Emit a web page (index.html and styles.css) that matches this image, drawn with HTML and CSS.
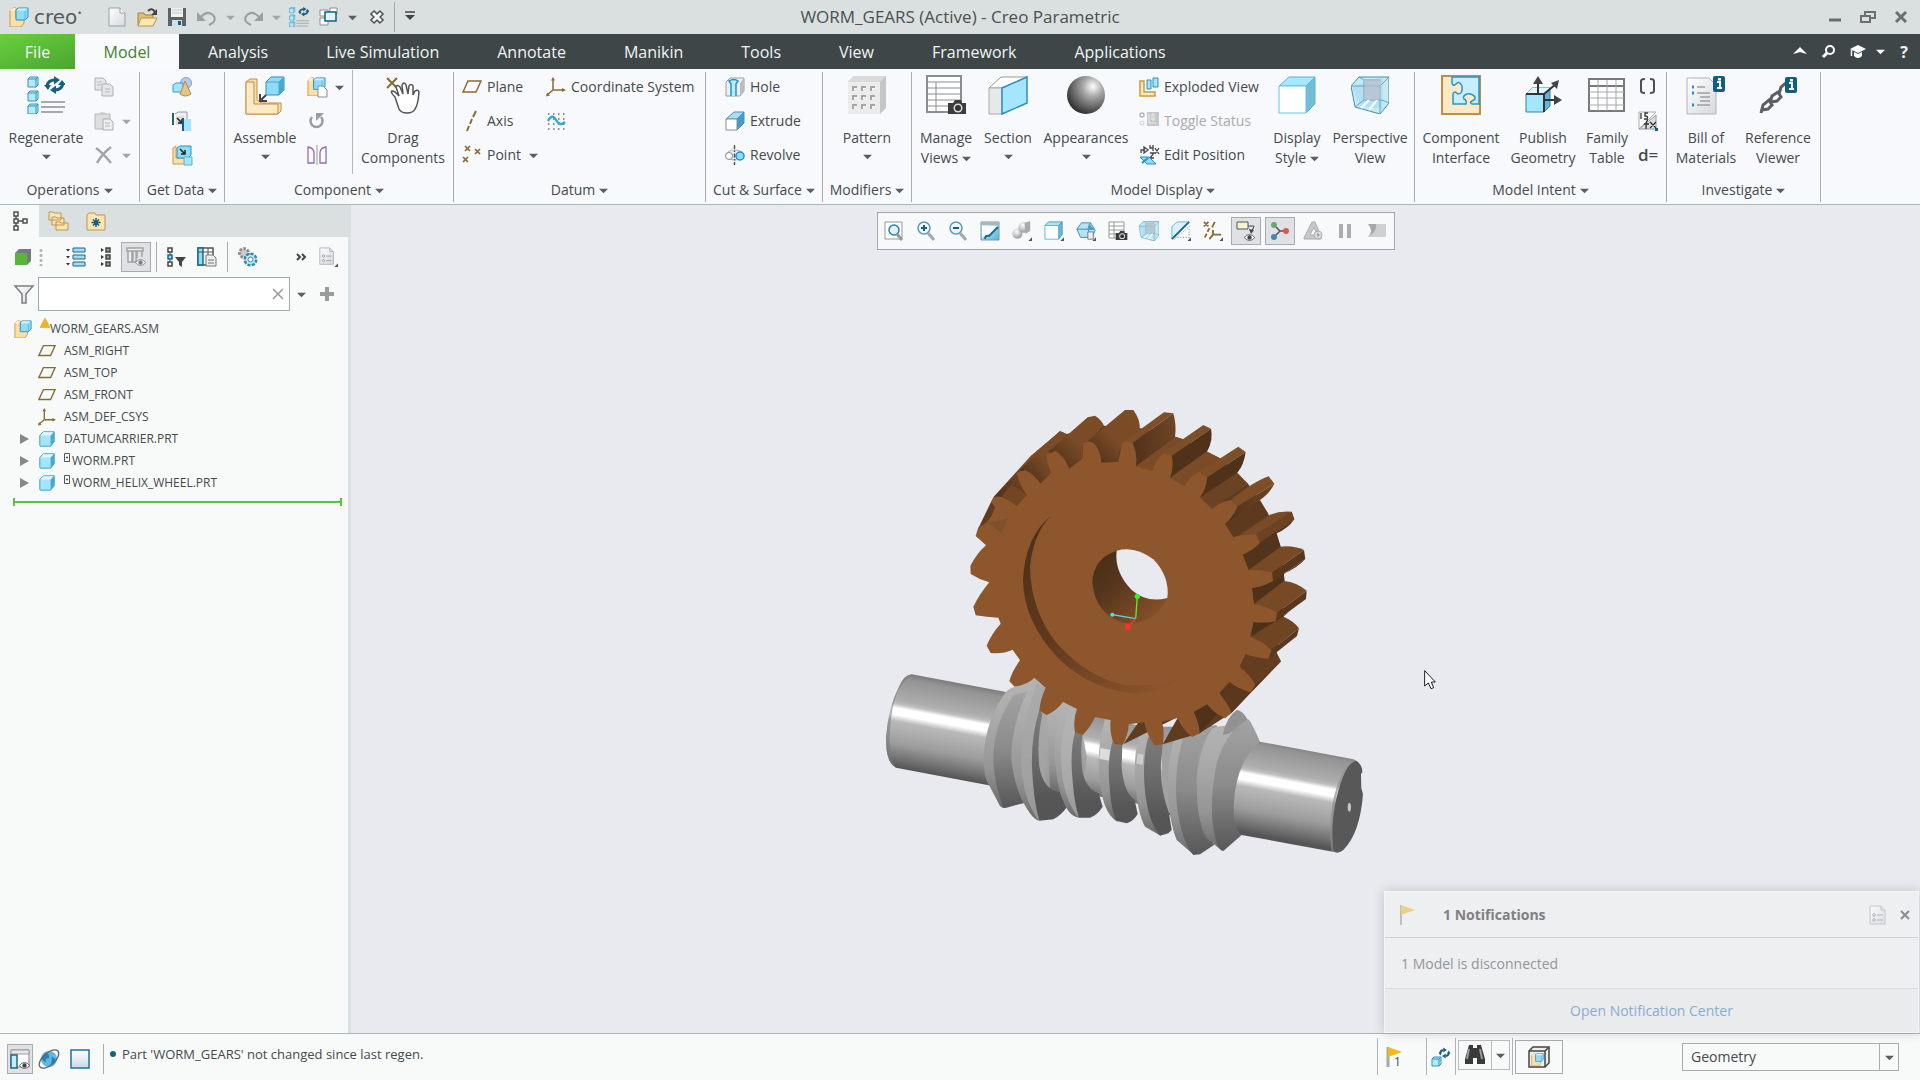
FILE: index.html
```html
<!DOCTYPE html>
<html lang="en">
<head>
<meta charset="utf-8">
<title>WORM_GEARS (Active) - Creo Parametric</title>
<link rel="stylesheet" href="styles.css">
</head>
<body>
<svg class="defs" aria-hidden="true">
  <defs>
    <linearGradient id="gDoc" x1="0" y1="0" x2="1" y2="1"><stop offset="0" stop-color="#fff"/><stop offset="1" stop-color="#d5d9dd"/></linearGradient>
    <linearGradient id="gBlue" x1="0" y1="0" x2="1" y2="1"><stop offset="0" stop-color="#eefaff"/><stop offset="1" stop-color="#4fb4dc"/></linearGradient>
    <linearGradient id="gWin" x1="0" y1="0" x2="0" y2="1"><stop offset="0" stop-color="#fff"/><stop offset="1" stop-color="#c9d8e0"/></linearGradient>
    <radialGradient id="gBall" cx=".68" cy=".28" r=".75"><stop offset="0" stop-color="#fff"/><stop offset=".35" stop-color="#a8a8a8"/><stop offset="1" stop-color="#333"/></radialGradient>
    <radialGradient id="gBall2" cx=".4" cy=".3" r=".8"><stop offset="0" stop-color="#fff"/><stop offset="1" stop-color="#8a8a8a"/></radialGradient>
    <linearGradient id="gShaft" gradientUnits="userSpaceOnUse" x1="300" y1="880" x2="248" y2="1158"><stop offset="0" stop-color="#7b7b7b"/><stop offset=".06" stop-color="#939393"/><stop offset=".3" stop-color="#aeaeae"/><stop offset=".34" stop-color="#c0c0c0"/><stop offset=".38" stop-color="#fff"/><stop offset=".45" stop-color="#fff"/><stop offset=".52" stop-color="#b9b9b9"/><stop offset=".75" stop-color="#9d9d9d"/><stop offset=".92" stop-color="#6e6e6e"/><stop offset="1" stop-color="#555"/></linearGradient>
    <linearGradient id="gLight" x1="0" y1="0" x2="0" y2="1"><stop offset="0" stop-color="#b4b4b4"/><stop offset=".3" stop-color="#ababab"/><stop offset=".7" stop-color="#959595"/><stop offset="1" stop-color="#6a6a6a"/></linearGradient>
    <linearGradient id="gMid" x1="0" y1="0" x2="0" y2="1"><stop offset="0" stop-color="#a3a3a3"/><stop offset=".5" stop-color="#8b8b8b"/><stop offset="1" stop-color="#575757"/></linearGradient>
    <linearGradient id="gDark" x1="0" y1="0" x2="0" y2="1"><stop offset="0" stop-color="#7b7b7b"/><stop offset=".4" stop-color="#6c6c6c"/><stop offset=".8" stop-color="#565656"/><stop offset="1" stop-color="#555"/></linearGradient>
    <linearGradient id="gFlank" x1="0" y1=".6" x2="1" y2=".3"><stop offset="0" stop-color="#50321b"/><stop offset="1" stop-color="#6f4524"/></linearGradient>
    <linearGradient id="gTooth" x1="1" y1="0" x2="0" y2="1"><stop offset="0" stop-color="#7c4c26"/><stop offset=".5" stop-color="#7a4b26"/><stop offset="1" stop-color="#482c17"/></linearGradient>
    <linearGradient id="gBore" x1="0" y1="0" x2="1" y2="1"><stop offset="0" stop-color="#4a2c17"/><stop offset=".35" stop-color="#54351c"/><stop offset=".75" stop-color="#7b4a25"/><stop offset="1" stop-color="#8d562d"/></linearGradient>
    <linearGradient id="gRing" x1="0" y1="0" x2=".8" y2="1"><stop offset="0" stop-color="#4c2f1a"/><stop offset=".5" stop-color="#60391d"/><stop offset="1" stop-color="#8d562d"/></linearGradient>
  </defs>
  <symbol id="caret" viewBox="0 0 10 10"><path d="M0 3h10L5 8z" fill="currentColor"/></symbol>
  <symbol id="asm" viewBox="0 0 20 20"><path d="M1 4l3-3h3v10h8v5l-3 4H1z" fill="#fbdfa6" stroke="#c99a4d"/><path d="M1 4l3-3h3L5 4z" fill="#fff3d6"/><path d="M7 3l2-2h10v9l-3 3H7z" fill="#8fdcf9" stroke="#2f8fb8"/><path d="M7.500 3.500L9 1.500h9.500L16 3.500z" fill="#d4f3ff"/><path d="M16 4v9" stroke="#5bb6da"/></symbol>
  <symbol id="cube" viewBox="0 0 20 20"><path d="M2 6l4-4h12v11l-4 5H3q-1 0-1-1z" fill="#a5e4fd" stroke="#2a9cca"/><path d="M14 6l4-4v11l-4 5z" fill="#4ba7ce"/><path d="M3 6l3-3.500h11L14 6z" fill="#dff6ff"/></symbol>
  <symbol id="plane" viewBox="0 0 20 20"><path d="M6 4h13l-5 11H1z" fill="none" stroke="#866b35" stroke-width="1.500"/></symbol>
  <symbol id="csys" viewBox="0 0 20 20"><path d="M7 2v11h11M7 13l-6 5" fill="none" stroke="#866b35" stroke-width="1.500"/><path d="M5 3.500L7 0l2 3.500zM16 11l4 2-4 2zM0 19.500l1-4 3 3z" fill="#866b35"/></symbol>
  <symbol id="sync" viewBox="0 0 20 20"><path d="M3 10a6 5 0 0 1 5-5M17 10a6 5 0 0 1-5 5" fill="none" stroke="#15607f" stroke-width="3"/><path d="M8 1l6 4-6 4zM12 19l-6-4 6-4zM0 9h6l-3 5zM20 11h-6l3-5z" fill="#15607f"/></symbol>
  <symbol id="regen" viewBox="0 0 38 38"><g fill="#b7e9fd" stroke="#3195bf"><path d="M1 3l2-2h8v8l-2 2H1zM1 17l2-2h8v8l-2 2H1zM1 30l2-2h8v8l-2 2H1z"/><path d="M9 3v8M9 17v8M9 30v8M1 3h8l2-2M1 17h8l2-2M1 30h8l2-2" fill="none"/></g><path d="M14 26h24M14 31h24M14 36h22" stroke="#a6a9ad" stroke-width="2"/><path d="M20 10q1-6 8-6M36 7q-1 7-8 7" fill="none" stroke="#15607f" stroke-width="3"/><path d="M27 0l6 4-6 4.500zM29 18l-6-4 6-4.500zM17 9h7l-3 5zM31 9h8l-4-5z" fill="#15607f"/></symbol>
  <symbol id="doc" viewBox="0 0 20 20"><path d="M2 1h11l5 5v13H2z" fill="url(#gDoc)" stroke="#9a9ea2"/><path d="M13 1v5h5" fill="#fff" stroke="#9a9ea2"/></symbol>
  <symbol id="listdoc" viewBox="0 0 20 20"><path d="M2 1h11l4 4v14H2z" fill="url(#gDoc)" stroke="#b0b4b8"/><path d="M13 1v4h4" fill="#dde" stroke="#b0b4b8"/><g fill="none" stroke="#9a9ea2"><circle cx="6" cy="10" r="1.300"/><circle cx="6" cy="15" r="1.300"/><path d="M9 10h6M9 15h6"/></g></symbol>
  <symbol id="persp" viewBox="0 0 38 38"><path d="M1 10L32 1v32L8 30z" fill="#c5e8f5"/><path d="M8 1h30v26l-9 11L4 31 0 10z" fill="#a8dcf0" fill-opacity=".6" stroke="#3f8fb0"/><path d="M0 10h29L38 1M29 10v28M8 1l5 3v20L4 31M13 24h18l7 3M13 4h16" fill="none" stroke="#5ea8c6"/><path d="M10 32l8-8M18 34l8-10" stroke="#fff" stroke-width="2"/><path d="M13 4h17v20H13z" fill="#b9bcc8" fill-opacity=".7"/></symbol>
  <symbol id="camera" viewBox="0 0 20 14"><path d="M1 3h5l2-3h6l1 3h4v11H1z" fill="#3c3c3c"/><circle cx="11" cy="8" r="4.500" fill="#ddd"/><circle cx="11" cy="8" r="3" fill="#333"/></symbol>
  <symbol id="info" viewBox="0 0 12 16"><rect width="12" height="16" rx="2" fill="#0f5f84"/><path d="M4 6h3v6h2M4 12h3" stroke="#fff" stroke-width="2" fill="none"/><path d="M5 2h3v2.500H5z" fill="#fff"/></symbol>
  <symbol id="eye" viewBox="0 0 12 8"><path d="M0 4q6-7 12 0-6 7-12 0z" fill="#fff" stroke="#555"/><circle cx="6" cy="4" r="2.500" fill="#444"/></symbol>
  <symbol id="cross" viewBox="0 0 12 12"><path d="M2 2l8 8M10 2l-8 8" stroke="currentColor" stroke-width="2"/></symbol>
  <symbol id="corner" viewBox="0 0 4 4"><path d="M4 0v4H0z" fill="#555"/></symbol>
</svg>

<header class="titlebar">
  <div class="quick">
    <span class="brand"><svg class="i20"><use href="#asm"/></svg><span class="brand-name">creo<sup>•</sup></span></span>
    <button class="tool" aria-label="New"><svg class="i20"><use href="#doc"/></svg></button>
    <button class="tool" aria-label="Open"><svg class="i20" viewBox="0 0 20 20"><path d="M1 6h6l1 2h8v10H1z" fill="#e9bd6c" stroke="#a5803e"/><path d="M4 11h16l-4 8H1z" fill="#fde7b5" stroke="#b8924f"/><path d="M11 4q4-4 7 1" fill="none" stroke="#444" stroke-width="2"/><path d="M20 2v6h-6z" fill="#444"/></svg></button>
    <button class="tool" aria-label="Save"><svg class="i20" viewBox="0 0 20 20"><path d="M1 1h18v18H1z" fill="#5e6265"/><path d="M4 1h12v9H4z" fill="#f0f1f1"/><path d="M5 3h10M5 6h10" stroke="#c4c6c8"/><path d="M5 13h10v6H5z" fill="#cfe0e8"/><path d="M11 14h3v4h-3z" fill="#17607f"/></svg></button>
    <button class="tool off" aria-label="Undo"><svg class="i20" viewBox="0 0 20 20"><path d="M4 10q6-7 12-2 5 6-4 10" fill="none" stroke="#9b9fa0" stroke-width="2"/><path d="M0 5v9h9z" fill="#9b9fa0"/></svg></button>
    <button class="drop off" aria-label="Undo list"><svg class="car"><use href="#caret"/></svg></button>
    <button class="tool off" aria-label="Redo"><svg class="i20" viewBox="0 0 20 20"><path d="M16 10q-6-7-12-2-5 6 4 10" fill="none" stroke="#9b9fa0" stroke-width="2"/><path d="M20 5v9h-9z" fill="#9b9fa0"/></svg></button>
    <button class="drop off" aria-label="Redo list"><svg class="car"><use href="#caret"/></svg></button>
    <button class="tool" aria-label="Regenerate"><svg class="i20"><use href="#regen"/></svg></button>
    <button class="tool" aria-label="Windows"><svg class="i20" viewBox="0 0 20 20"><g fill="#fff" stroke="#8b9093"><path d="M1 3h8v6H1zM11 1h7v6h-7zM1 11h8v7H1z"/></g><path d="M6 5h11v9H6z" fill="#dff4fd" stroke="#15607f" stroke-width="1.500"/></svg></button>
    <button class="drop" aria-label="Window list"><svg class="car"><use href="#caret"/></svg></button>
    <button class="tool wide" aria-label="Close window"><svg class="i16" viewBox="0 0 16 16"><path d="M3 3l10 10M13 3L3 13" stroke="#4c5254" stroke-width="6"/><path d="M4 4l8 8M12 4l-8 8" stroke="#f4f6f6" stroke-width="3"/></svg></button>
    <span class="bar-rule"></span>
    <button class="tool" aria-label="Customize toolbar"><svg class="i16" viewBox="0 0 16 16"><path d="M3 3h10" stroke="#444" stroke-width="1.500"/><path d="M3 6h10l-5 5z" fill="#444"/></svg></button>
  </div>
  <h1 class="title">WORM_GEARS (Active) - Creo Parametric</h1>
  <div class="winctl">
    <button aria-label="Minimize"><svg class="i16" viewBox="0 0 16 16"><path d="M2 11h12" stroke="#6b6f71" stroke-width="3"/></svg></button>
    <button aria-label="Restore"><svg class="i16" viewBox="0 0 16 16"><path d="M5 6V3h10v6h-4" fill="none" stroke="#6b6f71" stroke-width="2"/><path d="M1 7h9v6H1z" fill="none" stroke="#6b6f71" stroke-width="2"/></svg></button>
    <button aria-label="Close"><svg class="i16" viewBox="0 0 16 16"><path d="M3 3l10 10M13 3L3 13" stroke="#6b6f71" stroke-width="3"/></svg></button>
  </div>
</header>

<nav class="tabs">
  <button class="tab file">File</button>
  <button class="tab active">Model</button>
  <button class="tab">Analysis</button>
  <button class="tab">Live Simulation</button>
  <button class="tab">Annotate</button>
  <button class="tab">Manikin</button>
  <button class="tab">Tools</button>
  <button class="tab">View</button>
  <button class="tab">Framework</button>
  <button class="tab">Applications</button>
  <div class="tabs-right">
    <button aria-label="Minimize ribbon"><svg class="i16" viewBox="0 0 16 16"><path d="M1 10l7-7 7 7-4-1-3-1-3 1z" fill="#fff"/></svg></button>
    <button aria-label="Search"><svg class="i16" viewBox="0 0 16 16"><circle cx="9" cy="6" r="4" fill="none" stroke="#fff" stroke-width="2"/><path d="M6 9l-4 4" stroke="#fff" stroke-width="3"/></svg></button>
    <button aria-label="Learning"><svg class="i16" viewBox="0 0 16 16"><path d="M0 5l8-4 8 4-8 4z" fill="#fff"/><path d="M4 8v4q4 4 8 0V8L8 10z" fill="#fff"/><path d="M1.500 6v6" stroke="#fff" stroke-width="1.500"/></svg></button>
    <button class="drop" aria-label="Learning list"><svg class="car"><use href="#caret"/></svg></button>
    <button class="help" aria-label="Help">?</button>
  </div>
</nav>

<section class="ribbon">
  <div class="group g-ops">
    <div class="gbody">
      <button class="big"><svg class="i38"><use href="#regen"/></svg><span>Regenerate</span><svg class="car"><use href="#caret"/></svg></button>
      <div class="col">
        <button class="small off" aria-label="Copy"><svg class="i20" viewBox="0 0 20 20"><g fill="#e4e6e8" stroke="#aeb1b4"><path d="M1 1h8l3 3v9H1z"/><path d="M8 7h8l3 3v9H8z"/></g><path d="M3 5h5M3 8h4M11 12h5M11 15h5" stroke="#b6b9bb"/></svg></button>
        <button class="small off" aria-label="Paste"><svg class="i20" viewBox="0 0 20 20"><path d="M1 3h15v15H1z" fill="#dcdee0" stroke="#b4b7ba"/><path d="M5 4q0-3 3.500-3T12 4z" fill="#c9cccf"/><path d="M9 8h7l3 3v8H9z" fill="#eee" stroke="#a9acaf"/><path d="M11 12h5M11 15h5" stroke="#b6b9bb"/></svg><svg class="car"><use href="#caret"/></svg></button>
        <button class="small off" aria-label="Delete"><svg class="i20" viewBox="0 0 20 20"><path d="M2 3q7 5 15 15M17 2Q8 9 3 18" stroke="#a3a5a7" stroke-width="2.500" fill="none"/></svg><svg class="car"><use href="#caret"/></svg></button>
      </div>
    </div>
    <button class="glabel">Operations<svg class="car"><use href="#caret"/></svg></button>
  </div>

  <div class="group g-data">
    <div class="gbody">
      <div class="col">
        <button class="small" aria-label="User-defined feature"><svg class="i20" viewBox="0 0 20 20"><circle cx="14" cy="6" r="5.500" fill="#b9c8ee" stroke="#8b9ad0"/><path d="M1 8l3-2h7v9H1z" fill="#a5e4fd" stroke="#3b9cc4"/><path d="M13 4l6 13q-6 4-11 0z" fill="#e5c487" stroke="#b08c4c"/></svg></button>
        <button class="small" aria-label="Copy geometry"><svg class="i20" viewBox="0 0 20 20"><path d="M3 3l3-2h9v7" fill="#eee" stroke="#9a9a9a"/><path d="M1 2v12" stroke="#2d5d74" stroke-width="2"/><path d="M4 5h8v9H4z" fill="#ddd"/><path d="M5 7l5 5m0-4v4H6" stroke="#222" stroke-width="1.500" fill="none"/><path d="M12 8h7v12h-7z" fill="#a5e4fd"/><path d="M11 7v13" stroke="#15607f" stroke-width="2"/></svg></button>
        <button class="small" aria-label="Shrinkwrap"><svg class="i20" viewBox="0 0 20 20"><path d="M1 3l3-2v12h9v6H1z" fill="#fbdfa6" stroke="#c99a4d"/><path d="M5 3l3-2h11v9l-3 3H5z" fill="#8fdcf9" stroke="#2f8fb8"/><path d="M8 4l5 5m0-4v4H9" stroke="#222" stroke-width="1.500" fill="none"/><path d="M12 12h8v8h-8z" fill="#a5e4fd" stroke="#58b2d5"/></svg></button>
      </div>
    </div>
    <button class="glabel">Get Data<svg class="car"><use href="#caret"/></svg></button>
  </div>

  <div class="group g-comp">
    <div class="gbody">
      <button class="big"><svg class="i38" viewBox="0 0 38 38"><path d="M0 6l4-3h7v21l5 3h19v8l-3 3H0z" fill="#fbdfa6" stroke="#c08e45"/><path d="M0 6h8v22h24v10H0z" fill="#fdeac4" stroke="#c08e45"/><path d="M20 6l5-5h13v13l-5 5H20z" fill="#8fdcf9" stroke="#2f8fb8"/><path d="M20 6h13v13M33 6l5-5" fill="none" stroke="#4ba7ce"/><path d="M33 6l5-5v13l-5 5z" fill="#4ba7ce"/><path d="M20 19l-5 5m-1-6v7h7" stroke="#444" stroke-width="2" fill="none"/></svg><span>Assemble</span><svg class="car"><use href="#caret"/></svg></button>
      <div class="col ruled">
        <button class="small" aria-label="Create"><svg class="i20" viewBox="0 0 20 20"><use href="#asm" width="19" height="19"/><path d="M11 9h5l4 4v7h-9z" fill="#fff" stroke="#8a8d90"/></svg><svg class="car"><use href="#caret"/></svg></button>
        <button class="small" aria-label="Repeat"><svg class="i20" viewBox="0 0 20 20"><path d="M5 6a6 6 0 1 0 9 0" fill="none" stroke="#9a9c9e" stroke-width="2.500"/><path d="M9 2h8l-8 8z" fill="#9a9c9e"/></svg></button>
        <button class="small" aria-label="Mirror component"><svg class="i20" viewBox="0 0 20 20"><path d="M1 2q6 1 6 6v10H1zM19 2q-6 1-6 6v10h6z" fill="#fff" stroke="#9468ba" stroke-width="1.300"/><path d="M10 0v20" stroke="#999"/></svg></button>
      </div>
      <button class="big"><svg class="i38" viewBox="0 0 38 38"><path d="M3 2l10 10M13 2L3 12" stroke="#866b35" stroke-width="2"/><path d="M11 21q-5-5-3-6 3 0 7 5L12 11q1-3 4 0l3 7-1-9q2-4 4 0l2 9 1-8q2-3 4 0v9l2-4q3-2 4 1-1 13-4 17-2 4-8 4-6 0-8-4z" fill="#fff" stroke="#555" stroke-width="1.500"/></svg><span>Drag<br>Components</span></button>
    </div>
    <button class="glabel">Component<svg class="car"><use href="#caret"/></svg></button>
  </div>

  <div class="group g-datum">
    <div class="gbody">
      <div class="col">
        <button class="small"><svg class="i20"><use href="#plane"/></svg>Plane</button>
        <button class="small"><svg class="i20" viewBox="0 0 20 20"><path d="M14 0l-3 6M10 8l-2 5M7 15l-2 5" stroke="#866b35" stroke-width="2"/></svg>Axis</button>
        <button class="small"><svg class="i20" viewBox="0 0 20 20"><path d="M3 1l5 5m0-5L3 6M13 4l5 5m0-5l-5 5M1 12l5 5m0-5l-5 5" stroke="#866b35" stroke-width="1.700"/></svg>Point<svg class="car"><use href="#caret"/></svg></button>
      </div>
      <div class="col">
        <button class="small"><svg class="i20"><use href="#csys"/></svg>Coordinate System</button>
        <button class="small" aria-label="Sketch"><svg class="i20" viewBox="0 0 20 20"><path d="M2 3h17M2 8h17M2 13h17M2 18h17" stroke="#6b6e70" stroke-width="1.500" stroke-dasharray="1.500 3.500"/><path d="M2 10q4-8 8-1t9 2" fill="none" stroke="#33a9de" stroke-width="2.500"/></svg></button>
      </div>
    </div>
    <button class="glabel">Datum<svg class="car"><use href="#caret"/></svg></button>
  </div>

  <div class="group g-cut">
    <div class="gbody">
      <div class="col">
        <button class="small"><svg class="i20" viewBox="0 0 20 20"><path d="M1 5l4-4h14v13l-4 5H1z" fill="#eef0f1" stroke="#9a9ea1"/><path d="M15 6l4-5v13l-4 5z" fill="#b9bdc0"/><path d="M6 19V7L4 4q5-3 9 0l-2 3v12" fill="#b9e9fc" stroke="#1f93c7" stroke-width="1.500"/></svg>Hole</button>
        <button class="small"><svg class="i20" viewBox="0 0 20 20"><path d="M1 8l8-7h10l-7 7z" fill="#a5dff5" stroke="#4f93ae"/><path d="M12 8l7-7v11l-7 7z" fill="#3f9fc8" stroke="#4f93ae"/><path d="M1 8h11v11H1z" fill="#fff" stroke="#8a8e91"/></svg>Extrude</button>
        <button class="small"><svg class="i20" viewBox="0 0 20 20"><ellipse cx="10" cy="10" rx="9" ry="5" fill="#dff3fb" stroke="#9fb7c2"/><circle cx="4" cy="11" r="3.500" fill="#fff" stroke="#888"/><circle cx="15" cy="11" r="4" fill="#8fdcf9" stroke="#1f93c7" stroke-width="1.500"/><path d="M9.500 0v20" stroke="#555" stroke-width="1.500" stroke-dasharray="4 1.500 1.500 1.500"/></svg>Revolve</button>
      </div>
    </div>
    <button class="glabel">Cut &amp; Surface<svg class="car"><use href="#caret"/></svg></button>
  </div>

  <div class="group g-mod">
    <div class="gbody">
      <button class="big"><svg class="i38" viewBox="0 0 38 38"><path d="M0 6l6-6h32v32l-6 6z" fill="#c6c6c6"/><path d="M0 6l6-6h32l-6 6z" fill="#dadada"/><path d="M0 6h32v32H0z" fill="#ececec"/><g fill="#fff" stroke="#a5a5a5" stroke-width="2"><path d="M5 15v-4h4M14 15v-4h4M23 15v-4h4M5 24v-4h4M14 24v-4h4M23 24v-4h4M5 33v-4h4M14 33v-4h4M23 33v-4h4"/></g></svg><span>Pattern</span><svg class="car"><use href="#caret"/></svg></button>
    </div>
    <button class="glabel">Modifiers<svg class="car"><use href="#caret"/></svg></button>
  </div>

  <div class="group g-disp">
    <div class="gbody">
      <button class="big"><svg class="i38" viewBox="0 0 38 38"><path d="M0 0h34v36H0z" fill="#fff" stroke="#8b8e91" stroke-width="2"/><path d="M0 6h34M0 12h34M0 18h34M0 24h34M0 30h34M9 6v30" stroke="#8b8e91" fill="none"/><use href="#camera" x="20" y="24" width="20" height="14"/></svg><span>Manage<br>Views<svg class="car"><use href="#caret"/></svg></span></button>
      <button class="big"><svg class="i38" viewBox="0 0 38 38"><path d="M0 12L12 1h26L13 12z" fill="#fff" stroke="#999"/><path d="M0 12h13v26H0z" fill="#e8e8e8" stroke="#aaa"/><path d="M13 12L38 1v26L13 38z" fill="#a5e6ff" stroke="#2f8fb8" stroke-width="1.500"/></svg><span>Section</span><svg class="car"><use href="#caret"/></svg></button>
      <button class="big"><svg class="i38" viewBox="0 0 38 38"><circle cx="19" cy="19" r="19" fill="url(#gBall)"/></svg><span>Appearances</span><svg class="car"><use href="#caret"/></svg></button>
      <div class="col">
        <button class="small"><svg class="i20" viewBox="0 0 20 20"><path d="M1 4h4v11h11v4H1z" fill="#fdeac4" stroke="#c99a3d" stroke-width="1.500"/><path d="M8 3h4v9H8zM14 1h5v9h-5z" fill="#a5e4fd" stroke="#2f8fb8"/></svg>Exploded View</button>
        <button class="small off"><svg class="i20" viewBox="0 0 20 20"><circle cx="3" cy="4" r="2" fill="none" stroke="#b3b5b7" stroke-width="1.500"/><circle cx="3" cy="12" r="2" fill="none" stroke="#ccc"/><path d="M8 1h12v14H8z" fill="#c5c7c9"/><path d="M10 3v9h7M13 3v6h2V3z" stroke="#eee" fill="none"/></svg>Toggle Status</button>
        <button class="small"><svg class="i20" viewBox="0 0 20 20"><path d="M2 8V5h4M5 2l4 3-4 3zM11 0v3h3V0v6M16 3l4 6m0-6l-4 6M11 8h4l-4 5h4" stroke="#444" stroke-width="1.300" fill="none"/><path d="M1 12h9l7 7H8z" fill="#8fdcf9" stroke="#1f93c7"/><path d="M3 18l6-5" stroke="#1f93c7" stroke-width="2"/></svg>Edit Position</button>
      </div>
      <button class="big"><svg class="i38" viewBox="0 0 38 38"><path d="M1 10l10-9h26l-9 9z" fill="#a5e8ff" stroke="#5fb4d4"/><path d="M28 10l9-9v27l-9 9z" fill="#72bcd6" stroke="#5fb4d4"/><path d="M1 10h27v27H1z" fill="#fff" stroke="#69c4e6"/></svg><span>Display<br>Style<svg class="car"><use href="#caret"/></svg></span></button>
      <button class="big"><svg class="i38"><use href="#persp"/></svg><span>Perspective<br>View</span></button>
    </div>
    <button class="glabel">Model Display<svg class="car"><use href="#caret"/></svg></button>
  </div>

  <div class="group g-intent">
    <div class="gbody">
      <button class="big"><svg class="i38" viewBox="0 0 38 38"><path d="M0 0h38v38H0z" fill="#fdeac4" stroke="#c08e45" stroke-width="2"/><path d="M10 1h27v27h-7q-3-2 0-3 4-2 3-4-3-4-8-3-5 2-3 5 3 1 2 5H11V18q1-4 5 0 5 0 4-8-3-6-6-2-3 3-4-1z" fill="#c6eefe" stroke="#2f94c4" stroke-width="1.500"/></svg><span>Component<br>Interface</span></button>
      <button class="big"><svg class="i38" viewBox="0 0 38 38"><path d="M2 18l6-6h18l-6 6zM20 18l6-6v18l-6 6z" fill="#5fb8de" stroke="#2c86ad"/><path d="M2 18l6-6h18l-6 6z" fill="#dff6ff"/><path d="M2 18h18v18H2z" fill="#a5e6ff" stroke="#2c86ad"/><path d="M2 18h18v18M14 18V6M20 18L32 8M20 24h15" stroke="#333" stroke-width="2" fill="none"/><path d="M14 0l5 8H9zM35 4l-2 9-6-6zM38 24l-8 5V19z" fill="#444"/></svg><span>Publish<br>Geometry</span></button>
      <button class="big"><svg class="i38" viewBox="0 0 38 38"><path d="M1 3h35v32H1z" fill="#fff" stroke="#77797b" stroke-width="2"/><path d="M1 10h35" stroke="#77797b" stroke-width="2"/><path d="M1 16h35M1 22h35M1 29h35M10 4v31M19 4v31M28 4v31" stroke="#a4a6a8"/></svg><span>Family<br>Table</span></button>
      <div class="col">
        <button class="small" aria-label="Parameters"><svg class="i20" viewBox="0 0 20 20"><path d="M7 2Q3 2 3 4v10q0 2 4 2M12 2q4 0 4 2v10q0 2-4 2" fill="none" stroke="#4d4f51" stroke-width="2"/></svg></button>
        <button class="small" aria-label="Switch symbols"><svg class="i20" viewBox="0 0 20 20"><path d="M1 1h17L1 18z" fill="#fff" stroke="#aaa"/><path d="M1 18L18 4v14z" fill="#ddd" stroke="#999"/><path d="M3 2v6M10 2H7v3q4 0 2 3H6M10 9q-2 0-2 9M6 13h5M12 11l6 6m0-6l-6 6" stroke="#333" stroke-width="1.300" fill="none"/><path d="M17 17h3v3h-3z" fill="#15607f"/></svg></button>
        <button class="small relation" aria-label="Relations">d=</button>
      </div>
    </div>
    <button class="glabel">Model Intent<svg class="car"><use href="#caret"/></svg></button>
  </div>

  <div class="group g-inv">
    <div class="gbody">
      <button class="big"><svg class="i38" viewBox="0 0 38 38"><path d="M0 2h22l7 7v29H0z" fill="url(#gDoc)" stroke="#b0b3b6"/><path d="M5 11h2M5 17h2M5 29h2" stroke="#1f93c7" stroke-width="3"/><path d="M10 11h8M10 17h13M13 21h10M13 25h10M10 29h13" stroke="#9da0a3" stroke-width="1.500"/><use href="#info" x="26" y="0" width="12" height="16"/></svg><span>Bill of<br>Materials</span></button>
      <button class="big"><svg class="i38" viewBox="0 0 38 38"><g fill="none" stroke="#5c5e60" stroke-width="3"><path d="M2 37l2-8 6-5 3 5-4 4-6 1M11 27l2-7 6-4 3 5-4 4-6 1M20 18l2-7 5-4"/></g><use href="#info" x="26" y="1" width="12" height="16"/></svg><span>Reference<br>Viewer</span></button>
    </div>
    <button class="glabel">Investigate<svg class="car"><use href="#caret"/></svg></button>
  </div>
</section>

<main class="work">
  <aside class="panel">
    <div class="ptabs">
      <button class="ptab on" aria-label="Model tree"><svg class="i20" viewBox="0 0 20 20"><g fill="none" stroke="#4c4f51" stroke-width="1.500"><path d="M4 1h4v4H4zM4 8h4v4H4zM4 15h4v4H4zM13 8h4v4h-4zM6 5v3M6 12v3M8 10h5"/></g></svg></button>
      <button class="ptab" aria-label="Folder browser"><svg class="i20" viewBox="0 0 20 20"><g fill="#fbe3b2" stroke="#bb9650"><path d="M1 1h4l1 1h7v7H1zM4 6h4l1 1h7v7H4zM8 11h4l1 1h7v7H8z"/></g></svg></button>
      <button class="ptab" aria-label="Favorites"><svg class="i20" viewBox="0 0 20 20"><path d="M1 4l2-2h6l1 2h9v15H1z" fill="#fbe3b2" stroke="#bb9650"/><path d="M10 7v9M5.500 11.500h9M7 8.500l6 6M13 8.500l-6 6" stroke="#15607f" stroke-width="1.500"/></svg></button>
    </div>
    <div class="ptools">
      <button class="pcube" aria-label="Model display"><svg class="i16" viewBox="0 0 16 16"><path d="M0 4l4-4h12l-4 4zM12 4l4-4v12l-4 4z" fill="#77797b"/><path d="M0 4h12v12H0z" fill="#57b63a"/></svg></button>
      <span class="grip"></span>
      <button aria-label="Expand all"><svg class="i20" viewBox="0 0 20 20"><path d="M7 1h12v4H7zM7 8h12v4H7zM7 15h12v4H7z" fill="#9fdcf5" stroke="#1d6887"/><path d="M0 2h4L2 4.500zM0 9h4l-2 2.500zM0 16h4l-2 2.500z" fill="#333"/></svg></button>
      <button aria-label="Collapse all"><svg class="i20" viewBox="0 0 20 20"><path d="M10 1h4v4h-4zM10 8h4v4h-4zM10 15h4v4h-4z" fill="#999" stroke="#444" stroke-width="1.500"/><path d="M5 1v4l3-2zM5 8v4l3-2zM5 15v4l3-2z" fill="#333"/></svg></button>
      <button class="pressed" aria-label="Show columns"><svg class="i20" viewBox="0 0 20 20"><path d="M1 1h16v3H1zM2 4v11h4V4M7 4v11h3V4M11 4v7M16 4v6" stroke="#a0a2a4" stroke-width="1.500" fill="#eee"/><use href="#eye" x="9" y="12" width="11" height="7" opacity=".6"/></svg></button>
      <span class="rule"></span>
      <button aria-label="Tree filters"><svg class="i20" viewBox="0 0 20 20"><path d="M3 5v10" stroke="#444"/><path d="M1 1h4v4H1zM1 15h4v4H1z" fill="#fff" stroke="#444" stroke-width="1.500"/><path d="M1 8h4v4H1z" fill="#8fdcf9" stroke="#1d6887" stroke-width="1.500"/><path d="M8 10h11l-4 5v5l-3-2v-3z" fill="#444"/></svg></button>
      <button aria-label="Tree columns"><svg class="i20" viewBox="0 0 20 20"><path d="M1 1h15v17H1z" fill="#fff" stroke="#555" stroke-width="1.500"/><path d="M1 1h5v17H1z" fill="#8fdcf9" stroke="#1d6887" stroke-width="1.500"/><path d="M1 5h15M11 1v17" stroke="#555"/><path d="M9 8h7l3 3v8H9z" fill="#eee" stroke="#777"/><path d="M11 13h6M11 16h6" stroke="#777"/></svg></button>
      <span class="rule"></span>
      <button aria-label="Settings"><svg class="i20" viewBox="0 0 20 20"><circle cx="6" cy="6" r="4.500" fill="#ccc" stroke="#8b8d8f" stroke-width="3" stroke-dasharray="2.500 1.500"/><circle cx="12.500" cy="12.500" r="5.500" fill="#b8e6f8" stroke="#3089b3" stroke-width="3" stroke-dasharray="3 1.200"/><circle cx="12.500" cy="12.500" r="4.500" fill="#c5ecfb"/><circle cx="12.500" cy="12.500" r="2.500" fill="#fff" stroke="#3089b3"/></svg></button>
      <span class="grow"></span>
      <button class="more" aria-label="More"><svg class="i16" viewBox="0 0 16 16"><path d="M4 5l3 3-3 3M9 5l3 3-3 3" fill="none" stroke="#444" stroke-width="2"/></svg></button>
      <button aria-label="Tree list"><svg class="i20" viewBox="0 0 22 22"><use href="#listdoc" width="20" height="20"/><use href="#corner" x="18" y="18" width="4" height="4"/></svg></button>
    </div>
    <div class="search">
      <button aria-label="Filter"><svg class="i20" viewBox="0 0 20 20"><path d="M1 2h18l-7 8v9H8v-9z" fill="url(#gDoc)" stroke="#7c7f81" stroke-width="1.500"/></svg></button>
      <div class="sbox"><input type="text" aria-label="Search model tree"><button aria-label="Clear"><svg class="i12" viewBox="0 0 12 12"><path d="M1 1l10 10M11 1L1 11" stroke="#999" stroke-width="1.500"/></svg></button></div>
      <button class="drop" aria-label="Search options"><svg class="car"><use href="#caret"/></svg></button>
      <button class="plus" aria-label="Add filter"><svg class="i16" viewBox="0 0 16 16"><path d="M8 1v14M1 8h14" stroke="#999b9d" stroke-width="4"/></svg></button>
    </div>
    <ul class="tree">
      <li class="root"><svg class="i20"><use href="#asm"/></svg><svg class="warn" viewBox="0 0 10 10"><path d="M5 0l5 9.500H0z" fill="#f3b31b" stroke="#d89a10" stroke-width=".5"/></svg><span>WORM_GEARS.ASM</span></li>
      <li><svg class="i20"><use href="#plane"/></svg><span>ASM_RIGHT</span></li>
      <li><svg class="i20"><use href="#plane"/></svg><span>ASM_TOP</span></li>
      <li><svg class="i20"><use href="#plane"/></svg><span>ASM_FRONT</span></li>
      <li><svg class="i20"><use href="#csys"/></svg><span>ASM_DEF_CSYS</span></li>
      <li class="node"><button aria-label="Expand"><svg class="i12" viewBox="0 0 12 12"><path d="M2 1l9 5-9 5z" fill="#85878a"/></svg></button><svg class="i20"><use href="#cube"/></svg><span>DATUMCARRIER.PRT</span></li>
      <li class="node"><button aria-label="Expand"><svg class="i12" viewBox="0 0 12 12"><path d="M2 1l9 5-9 5z" fill="#85878a"/></svg></button><svg class="i20"><use href="#cube"/></svg><svg class="placed" viewBox="0 0 6 9"><path d="M.5.500h5v8h-5zM2.500 4h1v1h-1z" fill="none" stroke="#555"/></svg><span>WORM.PRT</span></li>
      <li class="node"><button aria-label="Expand"><svg class="i12" viewBox="0 0 12 12"><path d="M2 1l9 5-9 5z" fill="#85878a"/></svg></button><svg class="i20"><use href="#cube"/></svg><svg class="placed" viewBox="0 0 6 9"><path d="M.5.500h5v8h-5zM2.500 4h1v1h-1z" fill="none" stroke="#555"/></svg><span>WORM_HELIX_WHEEL.PRT</span></li>
    </ul>
    <div class="insert"></div>
  </aside>

  <section class="stage">
    <div class="floatbar">
      <button aria-label="Refit"><svg class="i20" viewBox="0 0 20 20"><path d="M1 1h17v17H1z" fill="#fff" stroke="#999"/><circle cx="10" cy="9" r="5" fill="#e2f2fa" stroke="#2a7fa8" stroke-width="1.500"/><path d="M13 13l5 6" stroke="#999" stroke-width="3"/></svg></button>
      <button aria-label="Zoom in"><svg class="i20" viewBox="0 0 20 20"><circle cx="8" cy="7" r="6" fill="#eaf6fb" stroke="#5e98b3" stroke-width="1.500"/><path d="M12 12l6 7" stroke="#a5a7a9" stroke-width="3"/><path d="M8 4v6M5 7h6" stroke="#15607f" stroke-width="2"/></svg></button>
      <button aria-label="Zoom out"><svg class="i20" viewBox="0 0 20 20"><circle cx="8" cy="7" r="6" fill="#eaf6fb" stroke="#5e98b3" stroke-width="1.500"/><path d="M12 12l6 7" stroke="#a5a7a9" stroke-width="3"/><path d="M5 7h6" stroke="#15607f" stroke-width="2"/></svg></button>
      <button aria-label="Repaint"><svg class="i20" viewBox="0 0 20 20"><path d="M1 1h18v18H1z" fill="url(#gBlue)" stroke="#7a9aa8"/><path d="M1 1h18v3H1z" fill="#aab6bb"/><path d="M2 5h16L9 15q-4-2-7 2z" fill="#f4fbff"/><path d="M5 18q0-4 4-3l9-9" stroke="#1d6887" stroke-width="2" fill="none"/></svg></button>
      <button aria-label="Rendering"><svg class="i20" viewBox="0 0 22 22"><circle cx="6" cy="14" r="5.500" fill="url(#gBall2)"/><circle cx="13" cy="7" r="6" fill="url(#gBall2)"/><path d="M14 2l6-2v11l-5 3z" fill="#aaa"/><use href="#corner" x="18" y="18" width="4" height="4"/></svg></button>
      <button aria-label="Display style"><svg class="i20" viewBox="0 0 22 22"><path d="M1 5l4-4h15l-4 4z" fill="#a5e8ff" stroke="#4b98b8"/><path d="M16 5l4-4v14l-4 5z" fill="#6fb8d3" stroke="#4b98b8"/><path d="M1 5h15v15H1z" fill="#fff" stroke="#5ab6d8"/><use href="#corner" x="18" y="18" width="4" height="4"/></svg></button>
      <button aria-label="Saved orientations"><svg class="i20" viewBox="0 0 22 22"><path d="M1 9l5-7h10l5 8-3 8H5z" fill="#b6e4f5" stroke="#3089b3"/><path d="M1 9h12l3-7M13 9l4 8" fill="none" stroke="#3089b3"/><path d="M14 3l7 7h-8z" fill="#4e9fc2"/><path d="M13 12h6v8h-6z" fill="#eee" stroke="#777"/><use href="#corner" x="18" y="18" width="4" height="4"/></svg></button>
      <button aria-label="View manager"><svg class="i20" viewBox="0 0 20 20"><path d="M1 1h15v16H1zM1 5h15M1 9h15M1 13h15M6 1v16" fill="#fff" stroke="#999"/><use href="#camera" x="7" y="9" width="13" height="11"/></svg></button>
      <button aria-label="Perspective view"><svg class="i20"><use href="#persp"/></svg></button>
      <button aria-label="Sections"><svg class="i20" viewBox="0 0 22 22"><path d="M1 6l6-5h12L1 19z" fill="#d7f2fc" stroke="#5ab6d8"/><path d="M4 20L20 6v12H5" fill="none" stroke="#666" stroke-dasharray="1 2"/><path d="M1 20L20 1" stroke="#1d6887" stroke-width="2"/><use href="#corner" x="18" y="18" width="4" height="4"/></svg></button>
      <button aria-label="Datum display"><svg class="i20" viewBox="0 0 22 22"><path d="M1 1l5 5m0-5L1 6M13 1l-3 6M7 8l-2 4M4 14l-2 4M11 10v6M11 15h9M7 20l4-5" stroke="#866b35" stroke-width="2" fill="none"/><use href="#corner" x="18" y="18" width="4" height="4"/></svg></button>
      <button class="pressed" aria-label="Annotation display"><svg class="i20" viewBox="0 0 20 20"><path d="M1 1h11v7H1z" fill="#fbf3cf" stroke="#555"/><path d="M12 5h6l-2 5" fill="none" stroke="#444"/><path d="M13 8l5 1-3 4z" fill="#444"/><use href="#eye" x="8" y="13" width="11" height="7"/></svg></button>
      <button class="pressed" aria-label="Spin center"><svg class="i20" viewBox="0 0 20 20"><path d="M4 4l6 6h6M10 10l-6 6" stroke="#555" stroke-width="1.500" fill="none"/><circle cx="4" cy="4" r="3" fill="#6aa971"/><circle cx="16" cy="10" r="3" fill="#d65a5a"/><circle cx="4" cy="16" r="3" fill="#4b86b0"/></svg></button>
      <button class="off" aria-label="Simulate"><svg class="i20" viewBox="0 0 20 20"><path d="M1 17L9 1h3l6 14v3H1z" fill="#c9c9c9" stroke="#aaa"/><path d="M7 14l4-8 3 8z" fill="#fff" stroke="#aaa"/><circle cx="15" cy="14" r="4" fill="#ddd" stroke="#aaa"/><path d="M14 12v4l3-2z" fill="#999"/></svg></button>
      <button class="off" aria-label="Pause"><svg class="i20" viewBox="0 0 20 20"><path d="M4 3h4v14H4zM12 3h4v14h-4z" fill="#aaacae"/></svg></button>
      <button class="off" aria-label="Results"><svg class="i20" viewBox="0 0 20 20"><path d="M1 3h18v13H1q9-6 0-13z" fill="#cfd0d2"/><path d="M1 3h8q2 7-8 13 6-6 0-13z" fill="#a5a7a9"/></svg></button>
    </div>

    <svg class="model" viewBox="-72 -63 1800 1500" role="img" aria-label="Worm and helical wheel assembly">
      <!-- worm shaft -->
      <path d="M155 853L470 912V1190L386 1186 108 1133Q76 1118 78 1040 86 950 115 895 130 855 155 853z" fill="url(#gShaft)"/>
      <path d="M155 853Q110 885 97 960T92 1080 108 1133Q76 1118 78 1040 86 950 115 895 130 855 155 853z" fill="#777" fill-opacity=".55"/>
      <!-- thread core -->
      <path d="M440 905L560 880 700 975 850 1010 950 1010 1090 1010 1200 1055V1330L1000 1300 800 1230 598 1205 400 1190z" fill="url(#gShaft)"/>
      <path d="M540 930L612 936 655 960 640 1210 598 1210 530 1180z" fill="url(#gLight)"/>
      <path d="M930 1025L1070 1005V1330L930 1280z" fill="#9c9c9c"/>
      <!-- thread turns, left to right -->
      <path d="M523 864L466 890Q440 895 428 920 374 1000 370 1110 372 1165 388 1187L415 1238Q422 1258 440 1253L495 1238 560 1000z" fill="url(#gLight)"/>
      <path d="M462 915Q400 1000 400 1110 402 1180 430 1253L495 1238 520 900z" fill="url(#gMid)"/>
      <path d="M523 864Q452 990 454 1110 465 1200 500 1255 520 1290 538 1292L557 1180V893z" fill="url(#gLight)"/>
      <path d="M530 880Q484 1010 483 1110 486 1220 535 1292L570 1200 557 893z" fill="#a6a6a6" fill-opacity=".7"/>
      <path d="M538 960Q513 1040 516 1130 520 1230 538 1292L580 1288Q605 1275 620 1252L600 1206Q550 1200 538 1130 530 1050 547 972z" fill="url(#gDark)"/>
      <path d="M612 934Q583 1010 584 1100 590 1200 620 1255 635 1282 657 1283L680 1100 655 955z" fill="url(#gLight)"/>
      <path d="M630 945Q600 1030 603 1110 606 1220 655 1283L670 1000z" fill="#b5b5b5" fill-opacity=".6"/>
      <path d="M645 1025Q631 1080 636 1150 642 1240 657 1283L690 1283Q712 1275 728 1250L716 1210Q682 1200 668 1150 660 1080 668 1030z" fill="url(#gDark)"/>
      <path d="M735 988Q712 1060 717 1150 725 1270 772 1295L785 1060 755 990z" fill="url(#gLight)"/>
      <path d="M721 1074L752 1080 748 1112 718 1106z" fill="#f4f4f4" fill-opacity=".7"/>
      <path d="M757 1055Q742 1110 748 1180 754 1270 770 1293L800 1300Q820 1295 833 1272L824 1230Q790 1205 785 1130L787 1064z" fill="url(#gDark)"/>
      <path d="M845 1012Q820 1080 825 1170 832 1270 855 1310L902 1337 890 1050 855 1010z" fill="url(#gLight)"/>
      <path d="M833 1090L851 1094 848 1126 829 1120z" fill="#fff" fill-opacity=".4"/>
      <path d="M905 1060L945 1020 945 1260 925 1270Q900 1180 905 1060z" fill="#a2a2a2"/>
      <path d="M865 1040Q848 1100 853 1180 860 1290 900 1337L925 1330 935 1320 927 1270Q900 1200 903 1120L908 1060z" fill="url(#gDark)"/>
      <path d="M960 1000Q925 1080 923 1180 925 1290 950 1350L1002 1395 1000 1050z" fill="url(#gLight)"/>
      <path d="M975 1025Q946 1110 948 1210 955 1340 1000 1395L1020 1393 1062 1365 1040 1310Q1000 1200 1014 1110 1030 1030 1058 1008L1050 993z" fill="url(#gMid)"/>
      <path d="M1058 1014Q1020 1060 1010 1170 1008 1290 1040 1345L1087 1383 1120 1050 1165 988 1090 1008z" fill="url(#gLight)"/>
      <path d="M1088 1035Q1100 980 1130 960 1145 958 1165 992L1110 1030z" fill="#929292"/>
      <path d="M1165 988Q1100 1020 1070 1120 1050 1220 1058 1300 1068 1380 1090 1383L1145 1335 1200 1055Q1180 1010 1170 993z" fill="url(#gMid)"/>
      <path d="M1200 1055L1480 1108Q1500 1115 1505 1140L1435 1388 1145 1335Q1120 1315 1121 1250 1125 1120 1200 1055z" fill="url(#gShaft)"/>
      <path d="M1480 1108Q1440 1150 1425 1240 1410 1330 1435 1388L1415 1385Q1405 1330 1418 1240 1435 1150 1480 1108z" fill="#8a8a8a" fill-opacity=".7"/>
      <path d="M1488 1112Q1508 1125 1507 1147L1503 1152 1504 1195 1509 1212Q1500 1330 1450 1380 1432 1394 1420 1380 1411 1300 1430 1220 1455 1120 1488 1112z" fill="#585858"/>
      <ellipse cx="1468" cy="1252" rx="5" ry="13" fill="#c4c4c4"/>

      <!-- wheel: body seen between the teeth -->
      <path d="M355 415L393 336 512 200 600 124 620 132 730 107 840 115 945 140 965 146 1080 205 1165 283 1225 372 1262 470 1274 573 1270 680 1250 790 1262 815 1115 968 1019 1030 908 1063 955 980 790 1063 840 990 500 500z" fill="#5f3b1f"/>
      <path d="M828 228L945 140 965 146 1080 205 973 290 930 263z" fill="#7a4b26"/>
      <path d="M1020 322L1132 248 1165 283 1056 356z" fill="#6b4222"/>
      <path d="M1095 402L1200 330 1225 372 1120 442z" fill="#5d3a1e"/>
      <!-- wheel: tooth sides, clockwise -->
      <path d="M400 322L512 198 600 124 618 132 470 260 500 314 470 347z" fill="url(#gTooth)"/>
      <path d="M480 240L600 124Q620 130 622 140L575 195 573 248 541 281z" fill="url(#gTooth)"/>
      <path d="M565 185L683 82 705 77Q725 90 732 107L668 170 667 206 628 236z" fill="url(#gTooth)"/>
      <path d="M675 160L795 60 820 60Q842 90 839 118L786 165 776 190 775 216 724 218z" fill="url(#gTooth)"/>
      <path d="M786 158L912 67 940 70 817 160z" fill="#7d4e28"/>
      <path d="M817 160L940 70Q950 105 945 142L828 228Q833 190 817 160z" fill="url(#gFlank)"/>
      <path d="M908 190L1030 105 1053 116 935 198z" fill="#7d4e28"/>
      <path d="M935 198L1053 116Q1060 150 1042 183L930 263Q942 230 935 198z" fill="#50321b"/>
      <path d="M1018 245L1135 170 1157 186 1041 263z" fill="#7d4e28"/>
      <path d="M1041 263L1157 186Q1152 225 1132 248L1020 322Q1040 295 1041 263z" fill="#50321b"/>
      <path d="M1112 330Q1180 275 1226 259L1243 281 1132 350z" fill="#7d4e28"/>
      <path d="M1132 350L1243 281Q1230 310 1200 330L1095 402Q1120 380 1132 350z" fill="url(#gFlank)"/>
      <path d="M1140 434L1230 374Q1260 362 1295 365L1303 388 1200 458 1188 433z" fill="#7a4b26"/>
      <path d="M1188 433L1295 365 1303 388 1200 458z" fill="#6b4222"/>
      <path d="M1200 458L1303 388Q1285 415 1250 430L1262 470 1166 540 1148 494Q1180 480 1200 458z" fill="#52331b"/>
      <path d="M1166 540L1262 470Q1300 466 1332 480L1236 548z" fill="#784925"/>
      <path d="M1236 548L1332 480 1336 507 1239 574z" fill="#58371c"/>
      <path d="M1239 574L1336 507Q1310 535 1272 550V575L1182 642 1176 594Q1210 590 1239 574z" fill="#4f311a"/>
      <path d="M1182 642L1272 573Q1310 577 1340 602L1251 668z" fill="#784925"/>
      <path d="M1251 668L1340 602 1338 627 1247 694z" fill="#58371c"/>
      <path d="M1247 694L1290 662 1270 680 1172 740 1180 696z" fill="#4f311a"/>
      <path d="M1172 740L1270 680Q1300 692 1317 715L1234 780z" fill="#6e4423"/>
      <path d="M1234 780L1317 715 1311 738 1226 806z" fill="#5a381d"/>
      <path d="M1139 831L1156 793 1226 806 1250 788 1263 814 1186 888z" fill="#643d20"/>
      <path d="M1186 884L1263 814 1172 907z" fill="#5a381d"/>
      <path d="M1078 909L1108 876 1172 907 1115 968z" fill="#5a381d"/>
      <path d="M1001 966L1041 943 1070 972 1019 1030z" fill="#50321b"/>
      <!-- wheel: front face -->
      <path d="M378 466L347 438 355 412Q390 400 405 352L393 336 400 322Q430 312 470 347L500 314Q478 285 470 250L495 240Q525 255 541 281L573 248Q560 215 560 195L585 182Q615 200 628 236L667 206 670 160 685 154 700 158Q722 180 724 218L775 215 786 160 800 154 817 158Q833 190 828 228L878 243Q885 210 910 190L935 197Q942 230 930 263L973 288Q985 262 1018 245L1041 262Q1040 295 1020 322L1056 356Q1080 335 1112 330L1132 350Q1120 380 1095 402L1120 442Q1150 430 1188 433L1200 458Q1180 480 1148 494L1166 540Q1200 538 1236 547L1239 573Q1210 590 1176 594L1182 642Q1220 648 1251 668L1247 694Q1215 700 1180 696L1172 740Q1210 755 1234 780L1226 806Q1190 805 1156 793L1139 831Q1170 855 1186 884L1172 907Q1135 897 1108 876L1078 909Q1105 945 1115 968L1096 985Q1065 972 1041 943L1001 966Q1018 1000 1019 1030L996 1041Q968 1020 953 984L906 995Q915 1030 908 1063L884 1066Q860 1035 853 997L806 1003Q805 1035 788 1065L762 1062Q748 1030 752 990L705 981Q693 1010 668 1035L645 1027Q638 990 651 957L609 936Q590 962 560 975L538 962Q540 930 557 893L523 864Q500 885 464 890L448 874Q455 845 480 811L458 779Q430 792 392 789L380 767Q395 730 422 701L415 683Q380 682 347 676L340 650Q360 610 388 577 360 570 332 552L331 528Q350 490 378 466z" fill="#8d562d"/>
      <path d="M385 398L443 386 425 430z" fill="#80502a"/>
      <path d="M425 318L455 285 500 314 470 347z" fill="#734623"/>
      <path d="M573 378Q520 430 510 530 512 660 590 760 690 870 800 885 930 895 1020 830 940 905 830 911 690 900 590 800 490 690 489 570 495 440 573 378z" fill="url(#gRing)"/>
      <!-- bore -->
      <path d="M770 482Q700 505 697 578 705 670 790 698 880 710 925 620L840 500z" fill="url(#gBore)"/>
      <path d="M770 482Q825 466 880 508 930 560 922 624 860 640 815 600 762 545 770 482z" fill="#e9eaef"/>
      <!-- spin center -->
      <path d="M827 686L832 619" stroke="#5fe92a" stroke-width="4"/><circle cx="832" cy="619" r="8" fill="#2df52b"/>
      <path d="M827 686L757 674" stroke="#48dcea" stroke-width="4"/><circle cx="757" cy="674" r="6" fill="#4be3f0"/>
      <path d="M827 686L803 711" stroke="#f23a32" stroke-width="4"/><circle cx="803" cy="711" r="9" fill="#fb3230"/>
      <!-- pointer -->
      <path d="M1694 842v46l11-9 8 17 8-3-7-17h12z" fill="#fff" stroke="#1b1c22" stroke-width="3"/>
    </svg>

    <section class="notice">
      <div class="nhead"><svg class="i20" viewBox="0 0 20 20"><path d="M2 0v20" stroke="#bdbfc1" stroke-width="2"/><path d="M2 0l14 5-14 5z" fill="#ecd083"/></svg><h2>1 Notifications</h2><button aria-label="Notification list"><svg class="i20 faint"><use href="#listdoc"/></svg></button><button aria-label="Dismiss"><svg class="i12"><use href="#cross"/></svg></button></div>
      <p class="nbody">1 Model is disconnected</p>
      <div class="nfoot"><a href="#notifications">Open Notification Center</a></div>
    </section>
  </section>
</main>

<footer class="status">
  <div class="sleft">
    <button class="pressed" aria-label="Toggle navigator"><svg class="i20" viewBox="0 0 20 20"><path d="M1 1h18v17H1z" fill="#fff" stroke="#888"/><path d="M1 1h18v4H1z" fill="#e8e8e8" stroke="#999"/><path d="M1 6h6v13H1z" fill="#c5ecfb" stroke="#1d6887" stroke-width="1.500"/><use href="#eye" x="9" y="13" width="11" height="7"/></svg></button>
    <button aria-label="Toggle browser"><svg class="i20" viewBox="0 0 20 20"><circle cx="10" cy="10" r="8" fill="#5cb7e2"/><path d="M6 4q5 0 4 5-4 0-3 4-3 0-4-4zM13 8q4 1 3 4-2 4-4 4z" fill="#2383b5"/><ellipse cx="10" cy="10" rx="12" ry="6" transform="rotate(-42 10 10)" fill="none" stroke="#666" stroke-width="1.300"/></svg></button>
    <button aria-label="Full screen"><svg class="i20" viewBox="0 0 20 20"><path d="M1 1h18v18H1z" fill="url(#gWin)" stroke="#1d7499" stroke-width="1.500"/></svg></button>
    <span class="rule"></span>
    <p class="msg"><i class="dot"></i>Part 'WORM_GEARS' not changed since last regen.</p>
  </div>
  <div class="sright">
    <button class="flag" aria-label="1 notification"><svg class="i20" viewBox="0 0 20 20"><path d="M2 0v20" stroke="#a7a9ab" stroke-width="3"/><path d="M2 0l14 5-14 5z" fill="#f4ba17"/></svg><span>1</span></button>
    <button class="sregen" aria-label="Regeneration status"><svg class="i20" viewBox="0 0 20 20"><path d="M1 12l2-2h7v7l-2 2H1z" fill="#b7e9fd" stroke="#3195bf"/><path d="M8 12v7M1 12h7l2-2" fill="none" stroke="#3195bf"/><use href="#sync" x="7" y="0" width="13" height="12"/></svg></button>
    <div class="find"><button aria-label="Find"><svg class="i20" viewBox="0 0 20 20"><path d="M4 0h4v3h4V0h4l4 14v5h-8v-6H8v6H0v-5z" fill="#3a3a3c"/><path d="M4 4L2 14M15 4l2 10" stroke="#9b9b9e" stroke-width="2"/></svg></button><button class="drop" aria-label="Find options"><svg class="car"><use href="#caret"/></svg></button></div>
    <div class="sbuf"><button aria-label="Selection buffer"><svg class="i22" viewBox="0 0 22 22"><path d="M1 5l4-4h16v16l-4 4H1z" fill="#eee" stroke="#444" stroke-width="1.500"/><path d="M1 5h16v16M17 5l4-4" fill="none" stroke="#444" stroke-width="1.500"/><use href="#asm" x="3" y="7" width="13" height="13"/></svg></button></div>
    <label class="filter"><select aria-label="Selection filter"><option>Geometry</option></select><span class="fdrop"><svg class="car"><use href="#caret"/></svg></span></label>
  </div>
</footer>
</body>
</html>
```
FILE: styles.css
```css
* { box-sizing: border-box; }
html, body { height: 100%; }
body {
  margin: 0;
  display: flex;
  flex-direction: column;
  font: 14px/20px "Open Sans", "Noto Sans", sans-serif;
  color: #45494b;
  background: #f8fafb;
  overflow: hidden;
}
button { background: none; border: 0; padding: 0; margin: 0; font: inherit; color: inherit; display: flex; align-items: center; justify-content: center; flex: none; }
h1, h2, p, ul { margin: 0; padding: 0; font-weight: 400; list-style: none; }
svg { flex: none; display: block; overflow: visible; }
.defs { position: absolute; width: 0; height: 0; }
.i12 { width: 12px; height: 12px; }
.i16 { width: 16px; height: 16px; }
.i20 { width: 20px; height: 20px; }
.i22 { width: 22px; height: 22px; }
.i38 { width: 38px; height: 38px; }
.car { width: 9px; height: 9px; color: #5b5e60; }
.off { color: #a9abad; }
.off .car { color: #a3a6a8; }
.pressed { background: #dfe1e4; border: 1px solid #a9acae; }
.grow { flex: 1; }

/* title bar */
.titlebar { flex: none; height: 34px; background: #dae0e0; display: grid; grid-template-columns: 1fr auto 1fr; align-items: center; }
.quick { display: flex; align-items: center; }
.brand { display: flex; align-items: center; gap: 5px; width: 102px; padding-left: 9px; }
.brand-name { font: 20px/24px "DejaVu Sans", sans-serif; color: #56595c; }
.brand-name sup { font-size: 8px; line-height: 8px; vertical-align: 8px; }
.tool { width: 30px; height: 30px; }
.tool.wide { width: 34px; }
.drop { width: 16px; height: 30px; }
.bar-rule { width: 1px; height: 30px; background: #a4a9aa; }
.title { font-size: 17px; color: #4b4f51; }
.winctl { display: flex; justify-content: flex-end; padding-right: 3px; }
.winctl button { width: 33px; height: 30px; }

/* menu tabs */
.tabs { flex: none; height: 35px; background: #3e4648; display: flex; font-size: 16px; color: #f2f4f4; }
.tab { padding: 0 29px; }
.tab.file { width: 75px; padding: 0; background: linear-gradient(160deg, #69d03f, #4aa52f); }
.tab.active { width: 104px; padding: 0; background: #f8fafb; color: #45802e; }
.tabs-right { margin-left: auto; display: flex; align-items: center; }
.tabs-right button { width: 29px; }
.tabs-right .drop { width: 16px; }
.tabs-right .car { color: #fff; }
.tabs-right .help { width: 32px; font-weight: 700; }

/* ribbon */
.ribbon { flex: none; display: flex; height: 136px; border-bottom: 1px solid #a9b8b8; background: #f8f9fc; padding-top: 1px; }
.group { display: flex; flex-direction: column; border-right: 1px solid #a9adaf; margin: 2px 0; }
.gbody { display: grid; height: 102px; }
.glabel { gap: 4px; height: 26px; padding-top: 6px; }
.big { flex-direction: column; justify-content: flex-start; padding-top: 4px; line-height: 20px; }
.big > span { margin-top: 14px; white-space: nowrap; }
.big > .i38 + span + .car { margin-top: 4px; }
.big span .car { display: inline-block; margin-left: 4px; }
.col { display: flex; flex-direction: column; margin-top: -2px; }
.small { height: 34px; justify-content: flex-start; gap: 5px; white-space: nowrap; }
.small .car { margin-left: 3px; }
.g-ops { width: 140px; }
.g-ops .gbody { grid-template-columns: 92px 1fr; }
.g-ops .col { padding-left: 2px; }
.g-data { width: 85px; }
.g-data .small { justify-content: center; }
.g-comp { width: 229px; }
.g-comp .gbody { grid-template-columns: 80px 48px 1fr; }
.ruled { border-right: 1px solid #b4b8ba; padding-left: 2px; }
.g-datum { width: 252px; }
.g-datum .gbody { grid-template-columns: 92px 1fr; }
.g-datum .col:first-child { padding-left: 8px; }
.g-cut { width: 117px; }
.g-cut .col { padding-left: 19px; }
.g-mod { width: 89px; }
.g-disp { width: 503px; }
.g-disp .gbody { grid-template-columns: 68px 56px 100px 132px 58px 1fr; }
.g-disp .col, .g-intent .col { padding-left: 3px; }
.g-intent { width: 252px; }
.g-intent .gbody { grid-template-columns: 92px 72px 56px 1fr; }
.g-inv { width: 154px; }
.g-inv .gbody { grid-template-columns: 78px 66px; }
.relation { font-weight: 600; font-size: 17px; }

/* work area */
.work { flex: 1; min-height: 0; display: flex; }
.panel { flex: none; width: 351px; border-right: 3px solid #dae0e0; background: #f8faf9; }
.ptabs { display: flex; height: 32px; background: #dae0e0; }
.ptab { width: 38px; height: 32px; }
.ptab.on { width: 39px; background: #f8faf9; }
.ptools { display: flex; align-items: center; height: 40px; padding: 0 5px 0 15px; }
.ptools button { width: 30px; height: 30px; }
.ptools .pcube { width: 16px; }
.ptools .more { width: 24px; }
.grip { width: 30px; height: 18px; background: radial-gradient(circle, #b0b3b5 1px, transparent 2px) 8px 0 / 4px 5px repeat-y; }
.rule { width: 1px; height: 30px; background: #a9acae; margin: 0 5px; flex: none; }
.search { display: flex; align-items: center; height: 34px; padding-left: 14px; }
.search > button:first-child { width: 20px; margin-right: 4px; }
.sbox { display: flex; align-items: center; width: 252px; height: 34px; border: 1px solid #9eabb0; background: #fff; }
.sbox input { flex: 1; min-width: 0; height: 32px; border: 0; outline: 0; background: transparent; font: inherit; padding: 0 8px; }
.sbox button { width: 22px; }
.search .drop { margin-left: 3px; }
.plus { width: 36px; }
.tree { padding-top: 7px; font-size: 12px; }
.tree li { display: flex; align-items: center; height: 22px; padding-left: 38px; }
.tree li > .i20 { width: 18px; height: 18px; margin-right: 8px; }
.tree .root { padding-left: 14px; }
.tree .node { padding-left: 14px; }
.tree .node button { width: 24px; height: 22px; padding-right: 4px; }
.warn { width: 10px; height: 10px; align-self: flex-start; }
.placed { width: 6px; height: 9px; margin-right: 2px; align-self: flex-start; margin-top: 3px; }
.insert { margin: 4px 6px 0 13px; height: 8px; border: solid #5cc43c; border-width: 0 2px; background: linear-gradient(#5cc43c, #5cc43c) center / 100% 2px no-repeat; }

/* graphics area */
.stage { flex: 1; min-width: 0; position: relative; display: flex; align-items: center; justify-content: center; background: #e9eaef; }
.model { width: 600px; height: 500px; }
.floatbar { position: absolute; top: 7px; left: 0; right: 0; margin: 0 auto; width: 518px; height: 38px; padding: 0 1px; display: flex; align-items: center; background: #f8f9fb; border: 1px solid #a2a5a8; }
.floatbar button { flex: 1; height: 28px; margin: 0 2px; }
.notice { position: absolute; right: 1px; bottom: 0; width: 535px; background: #eeeff1; border: 1px solid #f4f5f6; box-shadow: 0 0 10px rgba(90, 95, 110, .3); color: #949698; }
.nhead { display: flex; align-items: center; height: 46px; padding: 1px 7px 0 14px; border-bottom: 1px solid #cfd1d3; }
.nhead h2 { flex: 1; margin-left: 24px; font-size: 14px; font-weight: 700; color: #7e8082; }
.nhead button { margin-left: 11px; color: #8a8c8e; }
.faint { opacity: .7; }
.nbody { padding: 16px 16px 14px; border-bottom: 1px solid #d8dadc; }
.nfoot { padding: 12px 0 11px; text-align: center; background: #e9ebed; }
.nfoot a { color: #86aed2; text-decoration: none; }

/* status bar */
.status { flex: none; display: flex; justify-content: space-between; height: 47px; border-top: 1px solid #a9b8b8; background: #f8faf9; }
.sleft { display: flex; align-items: center; padding: 4px 0 0 7px; }
.sleft button { width: 30px; height: 30px; }
.sleft button.pressed { width: 26px; }
.sleft button + button { margin-left: 1px; }
.sleft .rule { margin: 0 6px 0 8px; }
.msg { display: flex; align-items: center; gap: 6px; font-size: 13px; padding-bottom: 10px; }
.dot { width: 6px; height: 6px; border-radius: 50%; background: #15607f; }
.sright { display: flex; align-items: flex-start; padding: 4px 21px 0 0; }
.sright > * { height: 37px; border-left: 1px solid #b0b3b5; }
.flag { width: 49px; justify-content: flex-start; padding-left: 8px; }
.flag .i20 { margin-right: -12px; }
.flag span { font-size: 12px; padding-top: 10px; }
.sregen { width: 29px; }
.find { display: flex; width: 57px; padding: 2px 2px 0; }
.find button { width: 34px; height: 30px; border: 1px solid #b9bcbe; }
.find button.drop { width: 18px; border-left: 0; }
.sbuf { padding: 2px 0 0 2px; width: 170px; }
.sbuf button { width: 48px; height: 34px; border: 1px solid #a9acae; }
.sright .filter { position: relative; width: 217px; height: 28px; margin-top: 5px; border: 1px solid #a9acae; }
.filter select { appearance: none; width: 100%; height: 26px; border: 0; border-radius: 0; padding: 0 24px 0 8px; font: inherit; color: inherit; background: #f8faf9; }
.fdrop { position: absolute; top: 0; right: 0; width: 19px; height: 26px; border-left: 1px solid #a9acae; display: flex; align-items: center; justify-content: center; pointer-events: none; }
```
